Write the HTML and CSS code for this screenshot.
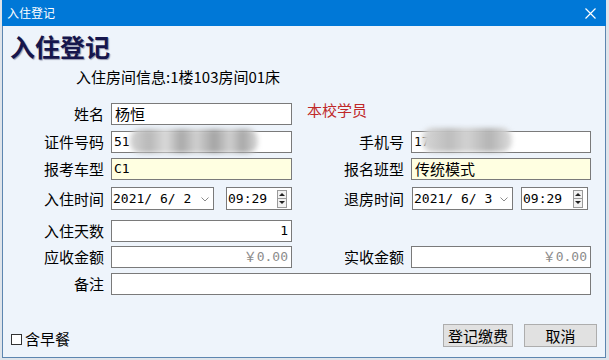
FILE: index.html
```html
<!DOCTYPE html>
<html lang="zh-CN">
<head>
  <meta charset="UTF-8">
  <title>入住登记</title>
  <link rel="stylesheet" href="styles.css">
</head>
<body>
  <div class="window">
    <div class="titlebar">
      <span class="title">入住登记</span>
      <svg class="close" width="11" height="11" viewBox="0 0 11 11"><path d="M0.5 0.5 L10.5 10.5 M10.5 0.5 L0.5 10.5" stroke="#fff" stroke-width="1.2"/></svg>
    </div>
    <div class="content">
      <h1 class="heading">入住登记</h1>
      <p class="room-info">入住房间信息:1楼103房间01床</p>

      <div class="form">
        <div class="row r-name">
          <span class="lbl">姓名</span>
          <div class="field">杨恒</div>
          <span class="tag">本校学员</span>
        </div>
        <div class="row r-id">
          <span class="lbl">证件号码</span>
          <div class="field num masked">51<span class="blur blur-id"></span></div>
          <span class="lbl">手机号</span>
          <div class="field num masked">17<span class="blur blur-phone"></span></div>
        </div>
        <div class="row r-car">
          <span class="lbl">报考车型</span>
          <div class="field num yellow">C1</div>
          <span class="lbl">报名班型</span>
          <div class="field yellow">传统模式</div>
        </div>
        <div class="row r-time">
          <span class="lbl">入住时间</span>
          <div class="datetime">
            <div class="date">
              <span class="num">2021/ 6/ 2</span>
              <svg class="drop" width="8" height="5" viewBox="0 0 8 5"><path d="M0.5 0.5 L4 4 L7.5 0.5" fill="none" stroke="#8a8a8a"/></svg>
            </div>
            <div class="time">
              <span class="num">09:29</span>
              <span class="spin"><i class="up"></i><i class="down"></i></span>
            </div>
          </div>
          <span class="lbl">退房时间</span>
          <div class="datetime right">
            <div class="date">
              <span class="num">2021/ 6/ 3</span>
              <svg class="drop" width="8" height="5" viewBox="0 0 8 5"><path d="M0.5 0.5 L4 4 L7.5 0.5" fill="none" stroke="#8a8a8a"/></svg>
            </div>
            <div class="time">
              <span class="num">09:29</span>
              <span class="spin"><i class="up"></i><i class="down"></i></span>
            </div>
          </div>
        </div>
        <div class="row r-days">
          <span class="lbl">入住天数</span>
          <div class="field num align-r">1</div>
        </div>
        <div class="row r-money">
          <span class="lbl">应收金额</span>
          <div class="field num align-r gray">￥0.00</div>
          <span class="lbl">实收金额</span>
          <div class="field num align-r gray">￥0.00</div>
        </div>
        <div class="row r-note">
          <span class="lbl">备注</span>
          <div class="field wide"></div>
        </div>
      </div>

      <div class="footer">
        <label class="check"><span class="box"></span>含早餐</label>
        <div class="buttons">
          <button class="btn btn-ok">登记缴费</button>
          <button class="btn btn-cancel">取消</button>
        </div>
      </div>
    </div>
  </div>
</body>
</html>
```

FILE: styles.css
```css
body { margin: 0; background: #dfe4ea; font-family: "Noto Sans CJK SC", sans-serif; color: #000; }

.window { margin-left: 2px; width: 604px; height: 358px; box-sizing: border-box; border: 1px solid #5d86b0; border-top: none; background: #eef4fb; display: flex; flex-direction: column; }

.titlebar { height: 26px; margin: 0 -1px; background: #0078d7; display: flex; align-items: center; justify-content: space-between; padding: 0 10px 0 5px; }
.titlebar .title { color: #fff; font-size: 12px; line-height: 14px; }
.titlebar .close { margin-top: 1px; }

.content { flex: 1; display: flex; flex-direction: column; padding: 0 7px 10px 7px; }

.heading { margin: 7px 0 0 0; font-size: 25px; line-height: 26px; font-weight: bold; color: #16164c; text-shadow: 1px 1px 1px rgba(40, 40, 80, 0.45); }
.room-info { margin: 9px 0 0 66px; font-size: 15px; line-height: 18px; }

.form { margin-top: 17px; }
.row { display: grid; grid-template-columns: 94px 181px 105px 180px; column-gap: 7px; align-items: center; height: 22px; font-size: 15px; }
.r-id { margin-top: 6px; }
.r-car { margin-top: 5px; }
.r-time { margin-top: 7px; height: 23px; }
.r-days { margin-top: 10px; }
.r-money { margin-top: 4px; }
.r-note { margin-top: 5px; }

.lbl { text-align: right; line-height: 18px; white-space: nowrap; }
.tag { color: #c02828; padding-left: 8px; line-height: 18px; margin-top: -8px; }

.field { height: 22px; box-sizing: border-box; border: 1px solid #7a7a7a; background: #fff; padding: 0 3px; line-height: 20px; white-space: nowrap; }
.field.yellow { background: #ffffe1; }
.field.wide { grid-column: 2 / 5; }
.field.align-r { text-align: right; }
.field.gray { color: #8c8c8c; }

.num { font-family: "DejaVu Sans Mono", "Noto Sans CJK SC", monospace; font-size: 13px; white-space: pre; }
.field.num { padding-left: 2px; }

.masked { position: relative; }
.blur { position: absolute; top: -3px; height: 24px; border-radius: 10px; filter: blur(2.5px); background: linear-gradient(90deg, #d4d4d4 0%, #b8b8b8 15%, #dadada 28%, #a9a9a9 40%, #d0d0d0 52%, #a4a4a4 66%, #cfcfcf 78%, #a8a8a8 88%, #d8d8d8 100%); }
.blur-id { left: 18px; width: 128px; }
.blur-phone { left: 10px; width: 90px; top: -4px; background: linear-gradient(90deg, #d8d8d8 0%, #bdbdbd 30%, #d2d2d2 50%, #b4b4b4 75%, #dcdcdc 100%); }

.datetime { display: flex; justify-content: space-between; height: 23px; }
.datetime.right { justify-content: flex-start; gap: 8px; margin-left: 1px; }
.date, .time { height: 23px; box-sizing: border-box; border: 1px solid #7a7a7a; background: #fff; display: flex; align-items: center; padding-left: 1px; }
.date { width: 103px; justify-content: space-between; padding-right: 4px; }
.datetime.right .date { width: 101px; }
.time { width: 66px; justify-content: space-between; padding-right: 4px; }
.datetime.right .time { width: 67px; }
.drop { margin-top: 1px; }

.spin { width: 10px; height: 18px; box-sizing: border-box; border: 1px solid #9a9a9a; background: #f2f2f2; display: flex; flex-direction: column; }
.spin i { flex: 1; position: relative; }
.spin .up { border-bottom: 1px solid #9a9a9a; }
.spin .up::after, .spin .down::after { content: ""; position: absolute; left: 1px; border-left: 3px solid transparent; border-right: 3px solid transparent; }
.spin .up::after { top: 2px; border-bottom: 3px solid #222; }
.spin .down::after { top: 2px; border-top: 3px solid #222; }

.footer { margin-top: auto; display: flex; justify-content: space-between; align-items: flex-end; }
.check { display: flex; align-items: center; font-size: 15px; line-height: 16px; margin: 0 0 0 1px; gap: 3px; }
.check .box { width: 11px; height: 11px; box-sizing: border-box; border: 1px solid #333; background: #fff; }
.buttons { display: flex; gap: 11px; margin-right: 1px; }
.btn { height: 23px; box-sizing: border-box; border: 1px solid #adadad; background: #e1e1e1; font-family: "Noto Sans CJK SC", sans-serif; font-size: 15px; line-height: 19px; padding: 0; color: #000; }
.btn-ok { width: 70px; }
.btn-cancel { width: 73px; }
```
